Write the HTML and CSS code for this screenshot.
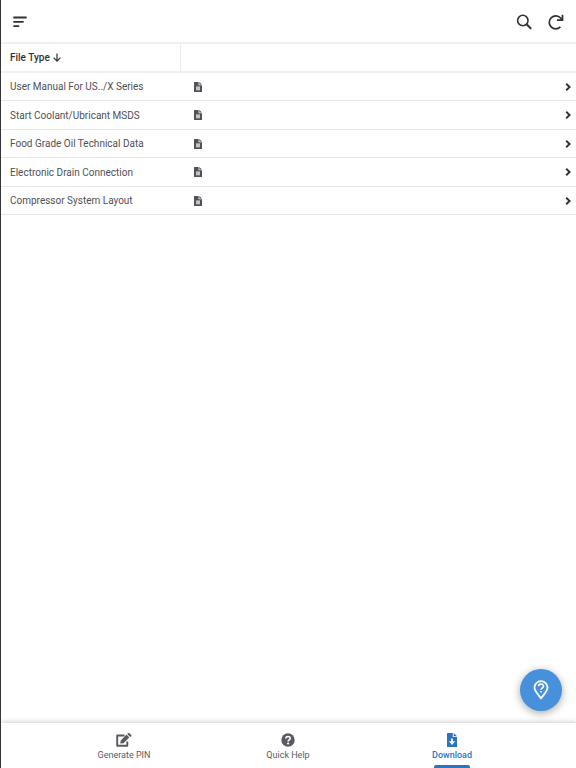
FILE: index.html
```
<!DOCTYPE html>
<html lang="en">
  <head>
    <meta charset="utf-8">
    <meta name="viewport" content="width=device-width, initial-scale=1">
    <title>Download</title>
    <link rel="stylesheet" href="styles.css">
  </head>

  <body>

    <!-- shared icons -->
    <svg class="icon-defs" aria-hidden="true">
      <symbol id="icon-file" viewBox="0 0 8 10">
        <path fill-rule="evenodd" d="M.5 0H4.600V3.200H8V9.500Q8 10 7.500 10H.5Q0 10 0 9.500V.5Q0 0 .5 0ZM2 4.500V8.200H6V4.500Z"/>
        <path d="M5.300 0L8 2.600H5.300Z"/>
        <path d="M2 4.500H6V8.200H2Z" opacity=".35"/>
      </symbol>
      <symbol id="icon-chevron" viewBox="0 0 6 8">
        <path d="M1.200 .8L4.600 4L1.200 7.200" fill="none" stroke="currentColor" stroke-width="1.900"/>
      </symbol>
    </svg>

    <header class="top-bar">
      <button class="icon-button" aria-label="Menu">
        <svg width="14" height="12" viewBox="0 0 14 12" fill="none" stroke="currentColor" stroke-width="1.800" stroke-linecap="round">
          <path d="M1 1.500H13M1 5.800H10M1 10.100H5.500"/>
        </svg>
      </button>
      <div class="top-actions">
        <button class="icon-button" aria-label="Search">
          <svg width="16" height="16" viewBox="0 0 16 16" fill="none" stroke="currentColor" stroke-linecap="round">
            <circle cx="6.800" cy="6.500" r="5.200" stroke-width="1.600"/>
            <path d="M10.800 10.500L14.600 14.200" stroke-width="2"/>
          </svg>
        </button>
        <button class="icon-button" aria-label="Refresh">
          <svg width="16" height="16" viewBox="0 0 16 16" fill="none" stroke="currentColor" stroke-width="1.700">
            <path d="M12.400 12.900A6.500 6.500 0 1 1 12.600 4L14 5.600"/>
            <path d="M14.500 .8V6.200H9"/>
          </svg>
        </button>
      </div>
    </header>

    <main class="content">
      <table class="file-table">
        <thead>
          <tr>
            <th class="col-name" aria-sort="ascending">
              <button class="sort-button">File Type
                <svg width="8" height="9" viewBox="0 0 8 9" fill="none" stroke="currentColor" stroke-width="1.200">
                  <path d="M4 .5V8M.6 4.700L4 8.100L7.400 4.700"/>
                </svg>
              </button>
            </th>
            <th class="col-file"></th>
            <th class="col-open"></th>
          </tr>
        </thead>
        <tbody>
          <tr>
            <td class="col-name">User Manual For US../X Series</td>
            <td class="col-file"><svg class="file-icon"><use href="#icon-file"/></svg></td>
            <td class="col-open"><button class="open-button" aria-label="Open User Manual"><svg width="6" height="8"><use href="#icon-chevron"/></svg></button></td>
          </tr>
          <tr>
            <td class="col-name">Start Coolant/Ubricant MSDS</td>
            <td class="col-file"><svg class="file-icon"><use href="#icon-file"/></svg></td>
            <td class="col-open"><button class="open-button" aria-label="Open Start Coolant"><svg width="6" height="8"><use href="#icon-chevron"/></svg></button></td>
          </tr>
          <tr>
            <td class="col-name">Food Grade Oil Technical Data</td>
            <td class="col-file"><svg class="file-icon"><use href="#icon-file"/></svg></td>
            <td class="col-open"><button class="open-button" aria-label="Open Food Grade Oil"><svg width="6" height="8"><use href="#icon-chevron"/></svg></button></td>
          </tr>
          <tr>
            <td class="col-name">Electronic Drain Connection</td>
            <td class="col-file"><svg class="file-icon"><use href="#icon-file"/></svg></td>
            <td class="col-open"><button class="open-button" aria-label="Open Electronic Drain"><svg width="6" height="8"><use href="#icon-chevron"/></svg></button></td>
          </tr>
          <tr>
            <td class="col-name">Compressor System Layout</td>
            <td class="col-file"><svg class="file-icon"><use href="#icon-file"/></svg></td>
            <td class="col-open"><button class="open-button" aria-label="Open Compressor System"><svg width="6" height="8"><use href="#icon-chevron"/></svg></button></td>
          </tr>
        </tbody>
      </table>
    </main>

    <button class="help-button" aria-label="Help">
      <svg width="16" height="20" viewBox="0 0 16 20" fill="none" stroke="currentColor">
        <path d="M8 18.400C6 15.200 1.500 11.500 1.500 7.500A6.500 6.300 0 0 1 14.500 7.500C14.500 11.500 10 15.200 8 18.400Z" stroke-width="1.800" stroke-linejoin="round"/>
        <path d="M5.500 6.300C5.500 3.400 10.500 3.400 10.500 6.300C10.500 8 8 8 8 9.800" stroke-width="1.600"/>
        <path d="M8 10.900V12.500" stroke-width="1.700"/>
      </svg>
    </button>

    <nav class="bottom-nav">
      <a class="nav-item" href="#pin">
        <svg width="16" height="14" viewBox="0 0 16 14">
          <path d="M8.500 2.500H1.200V12.700H11.300V8.500" fill="none" stroke="currentColor" stroke-width="1.900" stroke-linejoin="round"/>
          <path d="M4.200 10.600L4.700 7.400L10.500 1.600L13.300 4.400L7.500 10.200ZM11.200 .9L12 .2Q12.800 -.3 13.500 .3L15.200 2Q15.800 2.700 15.200 3.300L14.200 3.900Z" fill="currentColor"/>
        </svg>
        <span>Generate PIN</span>
      </a>
      <a class="nav-item" href="#help">
        <svg width="14" height="14" viewBox="0 0 14 14">
          <circle cx="7" cy="7" r="6.700" fill="currentColor"/>
          <path d="M4.900 5.500C4.900 2.700 9.200 2.900 9.200 5.300C9.200 6.900 7.100 6.700 7.100 8.500" fill="none" stroke="#fff" stroke-width="1.600"/>
          <circle cx="7.100" cy="10.500" r="1.100" fill="#fff"/>
        </svg>
        <span>Quick Help</span>
      </a>
      <a class="nav-item active" href="#download" aria-current="page">
        <svg width="10" height="14" viewBox="0 0 10 14">
          <path d="M.6 0H5.800V3.900H10V13.400Q10 14 9.400 14H.6Q0 14 0 13.400V.6Q0 0 .6 0ZM6.700 0L10 3.200H6.700Z" fill="currentColor"/>
          <path d="M4.100 5.500H5.900V8.200H8.200L5 11.900L1.800 8.200H4.100Z" fill="#fff"/>
        </svg>
        <span>Download</span>
      </a>
    </nav>

  </body>

</html>
```
FILE: styles.css
```
*{
  box-sizing: border-box;
}
body{
  margin: 0;
  min-height: 100vh;
  display: flex;
  flex-direction: column;
  border-left: 1px solid #35363b;
  background-color: white;
  color: #505054;
  font-family: Roboto, Arial, sans-serif;
  font-size: 10px;
}
button{
  padding: 0;
  border: none;
  background: none;
  color: inherit;
  font: inherit;
  cursor: pointer;
}
svg{
  display: block;
}
.icon-defs{
  position: absolute;
  width: 0;
  height: 0;
}
.top-bar{
  display: flex;
  justify-content: space-between;
  align-items: center;
  height: 44px;
  padding: 1px 12px 0;
  border-bottom: 2px solid #f0f0f1;
  color: #303134;
}
.top-actions{
  display: flex;
  gap: 16px;
}
.content{
  flex: 1;
}
.file-table{
  width: 100%;
  border-collapse: separate;
  border-spacing: 0;
}
.file-table th,
.file-table td{
  height: 28px;
  padding: 0;
  border-bottom: 1px solid #e8e8e9;
  text-align: left;
}
.file-table th{
  height: 29px;
  border-bottom: 2px solid #f0f0f1;
}
.file-table tr:nth-child(even) td{
  height: 29px;
}
.file-table .col-name{
  width: 180px;
  padding-left: 9px;
}
.file-table .col-file{
  padding-left: 13px;
}
.file-table .col-open{
  width: 24px;
  padding-left: 13px;
}
.file-table th.col-name{
  border-right: 1px solid #ededee;
}
.sort-button{
  display: flex;
  align-items: center;
  gap: 3px;
  color: #303134;
  font-weight: 500;
}
.file-icon{
  width: 8px;
  height: 10px;
  fill: #505257;
}
.open-button{
  display: block;
  color: #303134;
}
.help-button{
  position: fixed;
  right: 14px;
  bottom: 57px;
  display: flex;
  justify-content: center;
  align-items: center;
  width: 42px;
  height: 42px;
  border-radius: 50%;
  background-color: #4790dc;
  color: white;
  box-shadow: 0 2px 8px rgba(0, 0, 0, 0.35);
}
.bottom-nav{
  display: flex;
  height: 45px;
  padding: 0 42px 0 41px;
  box-shadow: 0 -1px 5px rgba(0, 0, 0, 0.2);
}
.nav-item{
  flex: 1;
  display: flex;
  flex-direction: column;
  align-items: center;
  gap: 3px;
  padding-top: 10px;
  color: #5a5b60;
  font-size: 9px;
  text-decoration: none;
}
.active{
  color: #2b74c5;
  font-weight: 500;
}
.active::after{
  content: "";
  width: 36px;
  height: 3px;
  margin-top: auto;
  border-radius: 2px 2px 0 0;
  background-color: #2b74c5;
}
```
